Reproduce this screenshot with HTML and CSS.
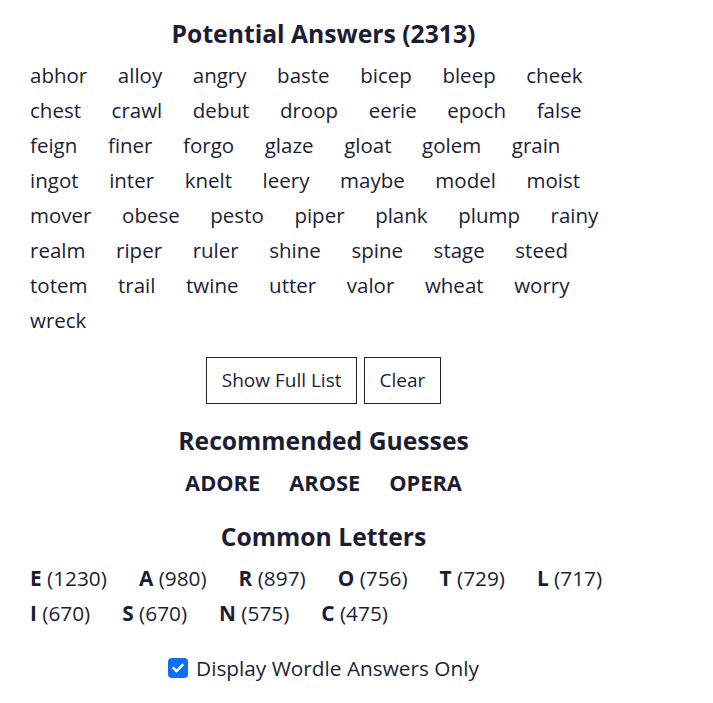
FILE: index.html
```html
<!DOCTYPE html>
<html lang="en">
<head>
<meta charset="utf-8">
<title>Wordle Helper</title>
<link rel="stylesheet" href="styles.css">
</head>
<body>
<main class="app">
  <section class="section">
    <h2 class="heading">Potential Answers (2313)</h2>
    <div class="words">
      <span>abhor</span><span>alloy</span><span>angry</span><span>baste</span><span>bicep</span><span>bleep</span><span>cheek</span>
      <span>chest</span><span>crawl</span><span>debut</span><span>droop</span><span>eerie</span><span>epoch</span><span>false</span>
      <span>feign</span><span>finer</span><span>forgo</span><span>glaze</span><span>gloat</span><span>golem</span><span>grain</span>
      <span>ingot</span><span>inter</span><span>knelt</span><span>leery</span><span>maybe</span><span>model</span><span>moist</span>
      <span>mover</span><span>obese</span><span>pesto</span><span>piper</span><span>plank</span><span>plump</span><span>rainy</span>
      <span>realm</span><span>riper</span><span>ruler</span><span>shine</span><span>spine</span><span>stage</span><span>steed</span>
      <span>totem</span><span>trail</span><span>twine</span><span>utter</span><span>valor</span><span>wheat</span><span>worry</span>
      <span>wreck</span>
    </div>
    <div class="buttons">
      <button class="btn" type="button">Show Full List</button>
      <button class="btn" type="button">Clear</button>
    </div>
  </section>

  <section class="section">
    <h2 class="heading">Recommended Guesses</h2>
    <div class="guesses">
      <span>ADORE</span><span>AROSE</span><span>OPERA</span>
    </div>
  </section>

  <section class="section">
    <h2 class="heading">Common Letters</h2>
    <div class="letters">
      <span><b>E</b> (1230)</span><span><b>A</b> (980)</span><span><b>R</b> (897)</span><span><b>O</b> (756)</span><span><b>T</b> (729)</span><span><b>L</b> (717)</span>
      <span><b>I</b> (670)</span><span><b>S</b> (670)</span><span><b>N</b> (575)</span><span><b>C</b> (475)</span>
    </div>
  </section>

  <label class="check">
    <span class="box"><svg viewBox="0 0 20 20" width="20" height="20"><path d="M5.5 10.2l3 3 6-6.2" fill="none" stroke="#fff" stroke-width="2.6" stroke-linecap="round" stroke-linejoin="round"/></svg></span>
    <span>Display Wordle Answers Only</span>
  </label>
</main>
</body>
</html>
```

FILE: styles.css
```css
* { box-sizing: border-box; }

body {
  margin: 0;
  background: #ffffff;
  color: #1c1d35;
  font-family: "Open Sans", "Noto Sans", sans-serif;
  font-size: 20.5px;
}

.app {
  width: 587px;
  margin-left: 30px;
  padding-top: 19px;
  display: flex;
  flex-direction: column;
}

.section {
  display: flex;
  flex-direction: column;
  margin-bottom: 22px;
}

.heading {
  margin: 0 0 10px;
  text-align: center;
  font-size: 24.7px;
  line-height: 29px;
  font-weight: 700;
}

.words,
.letters {
  display: flex;
  flex-wrap: wrap;
  line-height: 35px;
}

.words { column-gap: 30.6px; }

.letters {
  column-gap: 32px;
  font-size: 20.8px;
}

.letters b { font-weight: 700; }

.guesses {
  display: flex;
  justify-content: center;
  column-gap: 29px;
  line-height: 35px;
  font-weight: 700;
  font-size: 21.8px;
}

.buttons {
  display: flex;
  justify-content: center;
  gap: 7px;
  margin-top: 19px;
}

.btn {
  font: inherit;
  font-size: 19px;
  color: inherit;
  background: #fff;
  border: 1px solid #212529;
  border-radius: 0;
  padding: 0 14.5px;
  height: 47px;
  line-height: 45px;
}

.check {
  display: flex;
  justify-content: center;
  align-items: center;
  gap: 8px;
  margin-top: 0;
  font-size: 20.8px;
  line-height: 30px;
}

.box {
  width: 20px;
  height: 20px;
  border-radius: 4px;
  background: #0d6efd;
  display: flex;
}
```
